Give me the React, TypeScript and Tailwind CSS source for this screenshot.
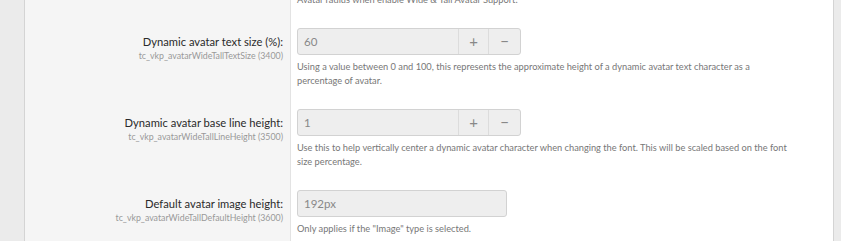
import React from "react";

const font = { fontFamily: 'Lato, "Noto Sans", sans-serif' };

function NumberInput({ value }: { value: string }) {
  return (
    <div className="flex h-[27px] w-[224px] rounded-[3px] border border-[#d2d2d2] bg-[#eeeeee] text-[#888]">
      <div className="flex flex-1 items-center pl-[6px] text-[11.5px]">{value}</div>
      <div className="flex w-[30px] items-center justify-center border-l border-[#dcdcdc] text-[15px] leading-none">+</div>
      <div className="flex w-[32px] items-center justify-center border-l border-[#dcdcdc] text-[15px] leading-none">−</div>
    </div>
  );
}

function TextInput({ value }: { value: string }) {
  return (
    <div className="flex h-[27px] w-[210px] items-center rounded-[3px] border border-[#d2d2d2] bg-[#eeeeee] pl-[6px] text-[11.5px] text-[#888]">
      {value}
    </div>
  );
}

function Row({
  label,
  sub,
  children,
  help,
}: {
  label: string;
  sub: string;
  children: React.ReactNode;
  help: React.ReactNode;
}) {
  return (
    <div className="flex">
      <div className="w-[266px] shrink-0 border-r border-[#e3e3e3] bg-[#f5f5f5] pr-[7px] pt-[10px] pb-[11px] text-right whitespace-nowrap">
        <div className="mt-[6px] text-[11.2px] leading-[15px] text-[#2a2a2a]">{label}</div>
        <div className="text-[8.8px] leading-[13px] text-[#999]">{sub}</div>
      </div>
      <div className="flex-1 bg-white pl-[6px] pr-[10px] pt-[10px] pb-[11px]">
        {children}
        <div className="mt-[5px] whitespace-nowrap text-[9.25px] leading-[14px] text-[#777]">{help}</div>
      </div>
    </div>
  );
}

export default function App() {
  return (
    <div style={font} className="flex h-[241px] w-[841px] overflow-hidden bg-[#ebebeb]">
      <div className="w-[24px] shrink-0" />
      <div className="w-[810px] shrink-0 border-x border-[#d4d4d4]">
        <div className="mt-[-7px] flex">
          <div className="w-[266px] shrink-0 border-r border-[#e3e3e3] bg-[#f5f5f5] pb-[11px]" />
          <div className="flex-1 whitespace-nowrap bg-white pl-[6px] pb-[11px] text-[9.25px] leading-[14px] text-[#777]">
            Avatar radius when enable Wide &amp; Tall Avatar Support.
          </div>
        </div>
        <Row
          label="Dynamic avatar text size (%):"
          sub="tc_vkp_avatarWideTallTextSize (3400)"
          help={
            <>
              Using a value between 0 and 100, this represents the approximate height of a dynamic avatar text character as a
              <br />
              percentage of avatar.
            </>
          }
        >
          <NumberInput value="60" />
        </Row>
        <Row
          label="Dynamic avatar base line height:"
          sub="tc_vkp_avatarWideTallLineHeight (3500)"
          help={
            <>
              Use this to help vertically center a dynamic avatar character when changing the font. This will be scaled based on the font
              <br />
              size percentage.
            </>
          }
        >
          <NumberInput value="1" />
        </Row>
        <Row
          label="Default avatar image height:"
          sub="tc_vkp_avatarWideTallDefaultHeight (3600)"
          help={<>Only applies if the "Image" type is selected.</>}
        >
          <TextInput value="192px" />
        </Row>
      </div>
    </div>
  );
}
